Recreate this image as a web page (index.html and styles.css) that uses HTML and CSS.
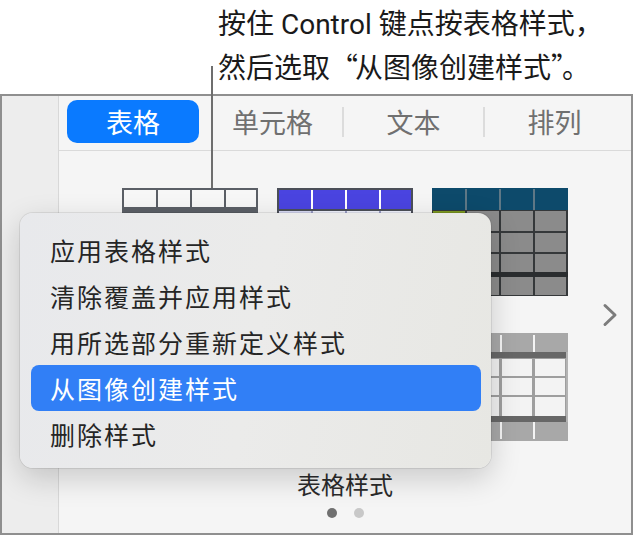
FILE: index.html
```html
<!DOCTYPE html>
<html lang="zh-CN">
<head>
<meta charset="utf-8">
<title>表格样式</title>
<link rel="stylesheet" href="styles.css">
</head>
<body>
<div class="callout">
  <p class="callout-text">按住 Control 键点按表格样式，<br>然后选取<span class="q">“</span>从图像创建样式<span class="q">”</span>。</p>
</div>
<span class="leader"></span>
<div class="panel">
  <aside class="sidebar"></aside>
  <div class="main">
    <nav class="tabs">
      <div class="seg"><span class="pill">表格</span></div>
      <div class="seg">单元格</div>
      <div class="seg sep">文本</div>
      <div class="seg sep">排列</div>
    </nav>
    <section class="content">
      <div class="gallery">
        <span class="spacer"></span>
        <div class="grid">
          <svg class="thumb" viewBox="0 0 136 108" width="136" height="108" shape-rendering="crispEdges">
            <rect width="136" height="108" fill="#5b5f66"/>
            <rect x="2" y="2" width="32" height="17" fill="#f7f7f7"/>
            <rect x="36" y="2" width="32" height="17" fill="#f7f7f7"/>
            <rect x="70" y="2" width="32" height="17" fill="#f7f7f7"/>
            <rect x="104" y="2" width="30" height="17" fill="#f7f7f7"/>
            <rect x="2" y="26" width="32" height="18" fill="#fbfbfb"/>
            <rect x="36" y="26" width="32" height="18" fill="#fbfbfb"/>
            <rect x="70" y="26" width="32" height="18" fill="#fbfbfb"/>
            <rect x="104" y="26" width="30" height="18" fill="#fbfbfb"/>
            <rect x="2" y="46" width="32" height="18" fill="#fbfbfb"/>
            <rect x="36" y="46" width="32" height="18" fill="#fbfbfb"/>
            <rect x="70" y="46" width="32" height="18" fill="#fbfbfb"/>
            <rect x="104" y="46" width="30" height="18" fill="#fbfbfb"/>
            <rect x="2" y="66" width="32" height="18" fill="#fbfbfb"/>
            <rect x="36" y="66" width="32" height="18" fill="#fbfbfb"/>
            <rect x="70" y="66" width="32" height="18" fill="#fbfbfb"/>
            <rect x="104" y="66" width="30" height="18" fill="#fbfbfb"/>
            <rect x="2" y="90" width="32" height="16" fill="#f7f7f7"/>
            <rect x="36" y="90" width="32" height="16" fill="#f7f7f7"/>
            <rect x="70" y="90" width="32" height="16" fill="#f7f7f7"/>
            <rect x="104" y="90" width="30" height="16" fill="#f7f7f7"/>
          </svg>
          <svg class="thumb" viewBox="0 0 136 108" width="136" height="108" shape-rendering="crispEdges">
            <rect width="136" height="108" fill="#4b4f58"/>
            <rect x="2" y="2" width="132" height="19" fill="#4a44e0"/>
            <rect x="34" y="2" width="2" height="19" fill="#ffffff"/>
            <rect x="68" y="2" width="2" height="19" fill="#ffffff"/>
            <rect x="102" y="2" width="2" height="19" fill="#ffffff"/>
            <rect x="2" y="23" width="132" height="83" fill="#eef0fb"/>
            <rect x="2" y="23" width="32" height="83" fill="#d7d9f3"/>
            <rect x="2" y="43" width="132" height="2" fill="#9da0c8"/>
            <rect x="2" y="64" width="132" height="2" fill="#9da0c8"/>
            <rect x="2" y="85" width="132" height="2" fill="#9da0c8"/>
            <rect x="34" y="23" width="2" height="83" fill="#9da0c8"/>
            <rect x="68" y="23" width="2" height="83" fill="#9da0c8"/>
            <rect x="102" y="23" width="2" height="83" fill="#9da0c8"/>
          </svg>
          <svg class="thumb" viewBox="0 0 136 108" width="136" height="108" shape-rendering="crispEdges">
            <rect width="136" height="108" fill="#35383a"/>
            <rect x="0" y="0" width="136" height="22" fill="#0d4a6b"/>
            <rect x="33" y="1" width="2" height="21" fill="#5f7886"/>
            <rect x="67" y="1" width="2" height="21" fill="#5f7886"/>
            <rect x="101" y="1" width="2" height="21" fill="#5f7886"/>
            <rect x="1" y="23" width="32" height="20" fill="#7d9a22"/>
            <rect x="35" y="23" width="32" height="20" fill="#8b8b8b"/>
            <rect x="69" y="23" width="32" height="20" fill="#8b8b8b"/>
            <rect x="103" y="23" width="31" height="20" fill="#8b8b8b"/>
            <rect x="1" y="45" width="32" height="19" fill="#8b8b8b"/>
            <rect x="35" y="45" width="32" height="19" fill="#8b8b8b"/>
            <rect x="69" y="45" width="32" height="19" fill="#8b8b8b"/>
            <rect x="103" y="45" width="31" height="19" fill="#8b8b8b"/>
            <rect x="1" y="66" width="32" height="18" fill="#8b8b8b"/>
            <rect x="35" y="66" width="32" height="18" fill="#8b8b8b"/>
            <rect x="69" y="66" width="32" height="18" fill="#8b8b8b"/>
            <rect x="103" y="66" width="31" height="18" fill="#8b8b8b"/>
            <rect x="0" y="84" width="136" height="5" fill="#2a2d2f"/>
            <rect x="1" y="89" width="32" height="18" fill="#8b8b8b"/>
            <rect x="35" y="89" width="32" height="18" fill="#8b8b8b"/>
            <rect x="69" y="89" width="32" height="18" fill="#8b8b8b"/>
            <rect x="103" y="89" width="31" height="18" fill="#8b8b8b"/>
          </svg>
          <svg class="thumb" viewBox="0 0 136 108" width="136" height="108" shape-rendering="crispEdges">
            <rect width="136" height="108" fill="#c9c9c9"/>
            <rect x="0" y="0" width="136" height="20" fill="#e4e4e4"/>
            <rect x="2" y="22" width="132" height="84" fill="#fafafa"/>
            <rect x="2" y="42" width="132" height="1" fill="#d0d0d0"/>
            <rect x="2" y="63" width="132" height="1" fill="#d0d0d0"/>
            <rect x="2" y="84" width="132" height="1" fill="#d0d0d0"/>
          </svg>
          <svg class="thumb" viewBox="0 0 136 108" width="136" height="108" shape-rendering="crispEdges">
            <rect width="136" height="108" fill="#2f6fb5"/>
            <rect x="2" y="22" width="132" height="84" fill="#eaf1fa"/>
            <rect x="2" y="42" width="132" height="2" fill="#9fb7d6"/>
            <rect x="2" y="63" width="132" height="2" fill="#9fb7d6"/>
            <rect x="2" y="84" width="132" height="2" fill="#9fb7d6"/>
          </svg>
          <svg class="thumb" viewBox="0 0 136 108" width="136" height="108" shape-rendering="crispEdges">
            <rect width="136" height="108" fill="#b3b3b3"/>
            <rect x="0" y="0" width="136" height="19" fill="#a8a8a8"/>
            <rect x="34" y="2" width="2" height="17" fill="#f4f4f4"/>
            <rect x="68" y="2" width="2" height="17" fill="#f4f4f4"/>
            <rect x="101" y="2" width="2" height="17" fill="#f4f4f4"/>
            <rect x="0" y="19" width="134" height="6" fill="#676767"/>
            <rect x="0" y="25" width="134" height="58" fill="#9e9e9e"/>
            <rect x="1" y="26" width="32" height="17" fill="#f1f1f1"/>
            <rect x="36" y="26" width="31" height="17" fill="#f1f1f1"/>
            <rect x="70" y="26" width="30" height="17" fill="#f3f3f3"/>
            <rect x="103" y="26" width="30" height="17" fill="#f3f3f3"/>
            <rect x="1" y="45" width="32" height="17" fill="#f1f1f1"/>
            <rect x="36" y="45" width="31" height="17" fill="#f1f1f1"/>
            <rect x="70" y="45" width="30" height="17" fill="#f3f3f3"/>
            <rect x="103" y="45" width="30" height="17" fill="#f3f3f3"/>
            <rect x="1" y="64" width="32" height="19" fill="#f1f1f1"/>
            <rect x="36" y="64" width="31" height="19" fill="#f1f1f1"/>
            <rect x="70" y="64" width="30" height="19" fill="#f3f3f3"/>
            <rect x="103" y="64" width="30" height="19" fill="#f3f3f3"/>
            <rect x="0" y="83" width="134" height="6" fill="#676767"/>
            <rect x="0" y="89" width="136" height="19" fill="#a8a8a8"/>
            <rect x="34" y="89" width="2" height="17" fill="#f4f4f4"/>
            <rect x="68" y="89" width="2" height="17" fill="#f4f4f4"/>
            <rect x="101" y="89" width="2" height="17" fill="#f4f4f4"/>
          </svg>
        </div>
        <svg class="chev" viewBox="0 0 16 24" width="16" height="24">
          <path d="M3 2.5 L13 12 L3 21.5" fill="none" stroke="#7c7c7c" stroke-width="3" stroke-linecap="round" stroke-linejoin="round"/>
        </svg>
      </div>
      <div class="label">表格样式</div>
      <div class="dots"><i class="dot on"></i><i class="dot"></i></div>
    </section>
  </div>
</div>
<ul class="menu">
  <li class="item">应用表格样式</li>
  <li class="item">清除覆盖并应用样式</li>
  <li class="item">用所选部分重新定义样式</li>
  <li class="item active">从图像创建样式</li>
  <li class="item">删除样式</li>
</ul>
</body>
</html>
```
FILE: styles.css
```css
* { box-sizing: border-box; }

html, body {
  margin: 0;
  padding: 0;
}

body {
  position: relative;
  width: 633px;
  height: 535px;
  overflow: hidden;
  background: #ffffff;
  font-family: Roboto, "Noto Sans CJK SC", sans-serif;
  color: #1c1c1c;
}

.callout {
  height: 94px;
  padding: 5px 0 0 218px;
}

.callout-text {
  margin: 0;
  font-size: 28px;
  line-height: 40.5px;
  color: #1a1a1a;
  white-space: nowrap;
}

.q {
  font-family: "Noto Sans CJK SC", sans-serif;
  letter-spacing: -3px;
}

.leader {
  position: absolute;
  left: 211px;
  top: 66px;
  width: 2px;
  height: 122px;
  background: #6e6e6e;
  z-index: 2;
}

.panel {
  display: flex;
  height: 441px;
  border: 2px solid #8f8f8f;
  background: #f5f5f5;
}

.sidebar {
  width: 57px;
  flex: none;
  background: #ededed;
  border-right: 1px solid #d8d8d8;
}

.main {
  flex: 1;
  display: flex;
  flex-direction: column;
}

.tabs {
  display: flex;
  height: 55px;
  padding: 4px 0 0 2px;
  border-bottom: 1px solid #dadada;
  background: #f5f5f5;
}

.seg {
  position: relative;
  width: 141px;
  height: 43px;
  display: flex;
  align-items: center;
  justify-content: center;
  font-size: 27px;
  color: #707070;
}

.seg.sep::before {
  content: "";
  position: absolute;
  left: -1px;
  top: 7px;
  width: 2px;
  height: 30px;
  background: #dcdcdc;
}

.pill {
  margin-left: 3px;
  width: 132px;
  height: 43px;
  border-radius: 10px;
  background: #0a7aff;
  color: #ffffff;
  display: flex;
  align-items: center;
  justify-content: center;
}

.content {
  flex: 1;
  display: flex;
  flex-direction: column;
  align-items: center;
  padding-top: 37px;
}

.gallery {
  width: 100%;
  display: grid;
  grid-template-columns: 1fr auto 1fr;
  align-items: center;
}

.grid {
  display: grid;
  grid-template-columns: repeat(3, 136px);
  grid-auto-rows: 108px;
  column-gap: 19px;
  row-gap: 37px;
}

.thumb { display: block; }

.chev {
  justify-self: end;
  margin-right: 13px;
  display: block;
}

.label {
  margin-top: 30px;
  font-size: 24px;
  line-height: 30px;
  color: #2b2b2b;
}

.dots {
  margin-top: 7px;
  display: flex;
  gap: 17px;
}

.dot {
  display: block;
  width: 10px;
  height: 10px;
  border-radius: 50%;
  background: #c8c8c8;
}

.dot.on { background: #707070; }

.menu {
  position: absolute;
  left: 20px;
  top: 213px;
  width: 471px;
  height: 255px;
  margin: 0;
  padding: 14px 10px 10px 11px;
  list-style: none;
  border-radius: 13px;
  background: linear-gradient(100deg, #e8e9ec 0%, #ebebea 50%, #e7e7e3 100%);
  box-shadow: 0 10px 30px rgba(0, 0, 0, 0.18), 0 0 0 1px rgba(0, 0, 0, 0.08);
  z-index: 3;
}

.item {
  height: 46px;
  display: flex;
  align-items: center;
  padding-left: 19px;
  border-radius: 8px;
  font-size: 25px;
  letter-spacing: 2px;
  color: #252525;
}

.item.active {
  background: #317ff6;
  color: #ffffff;
}
```
